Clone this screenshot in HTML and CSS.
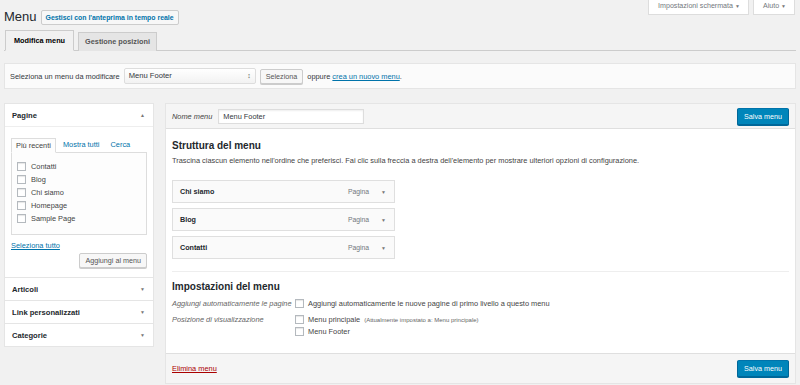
FILE: index.html
```html
<!DOCTYPE html>
<html lang="it">
<head>
  <meta charset="UTF-8" />
  <title>Menu</title>
  <link rel="stylesheet" href="styles.css">
</head>
<body>
  <div class="wrap">

    <div class="page-head">
      <div class="title-group">
        <h1>Menu</h1>
        <a class="title-action">Gestisci con l'anteprima in tempo reale</a>
      </div>
      <div class="screen-meta">
        <span class="meta-btn">Impostazioni schermata <i class="arr">&#9660;</i></span>
        <span class="meta-btn">Aiuto <i class="arr">&#9660;</i></span>
      </div>
    </div>

    <div class="nav-tabs">
      <span class="nav-tab active">Modifica menu</span>
      <span class="nav-tab">Gestione posizioni</span>
    </div>

    <div class="manage-menus">
      <span>Seleziona un menu da modificare</span>
      <span class="select">Menu Footer <i class="updown">&#8597;</i></span>
      <span class="btn">Seleziona</span>
      <span>oppure <a class="link">crea un nuovo menu</a>.</span>
    </div>

    <div class="columns">

      <div class="side">
        <div class="acc open">
          <div class="acc-head">Pagine <i class="arr up">&#9650;</i></div>
          <div class="acc-body">
            <div class="inner-tabs">
              <span class="inner-tab active">Più recenti</span>
              <span class="inner-tab">Mostra tutti</span>
              <span class="inner-tab">Cerca</span>
            </div>
            <div class="checklist">
              <label class="check-row"><span class="cb"></span>Contatti</label>
              <label class="check-row"><span class="cb"></span>Blog</label>
              <label class="check-row"><span class="cb"></span>Chi siamo</label>
              <label class="check-row"><span class="cb"></span>Homepage</label>
              <label class="check-row"><span class="cb"></span>Sample Page</label>
            </div>
            <a class="link select-all">Seleziona tutto</a>
            <div class="add-row"><span class="btn">Aggiungi al menu</span></div>
          </div>
        </div>
        <div class="acc"><div class="acc-head">Articoli <i class="arr">&#9660;</i></div></div>
        <div class="acc"><div class="acc-head">Link personalizzati <i class="arr">&#9660;</i></div></div>
        <div class="acc"><div class="acc-head">Categorie <i class="arr">&#9660;</i></div></div>
      </div>

      <div class="main">
        <div class="main-head">
          <label class="name-label">Nome menu</label>
          <span class="input">Menu Footer</span>
          <span class="btn primary push">Salva menu</span>
        </div>

        <div class="main-body">
          <h3>Struttura del menu</h3>
          <p class="desc">Trascina ciascun elemento nell'ordine che preferisci. Fai clic sulla freccia a destra dell'elemento per mostrare ulteriori opzioni di configurazione.</p>

          <ul class="menu-items">
            <li class="menu-item"><b>Chi siamo</b><span class="type">Pagina</span><i class="arr">&#9660;</i></li>
            <li class="menu-item"><b>Blog</b><span class="type">Pagina</span><i class="arr">&#9660;</i></li>
            <li class="menu-item"><b>Contatti</b><span class="type">Pagina</span><i class="arr">&#9660;</i></li>
          </ul>

          <div class="settings">
            <h3>Impostazioni del menu</h3>
            <div class="set-row">
              <span class="set-label">Aggiungi automaticamente le pagine</span>
              <div class="set-field">
                <label class="check-row"><span class="cb"></span>Aggiungi automaticamente le nuove pagine di primo livello a questo menu</label>
              </div>
            </div>
            <div class="set-row">
              <span class="set-label">Posizione di visualizzazione</span>
              <div class="set-field">
                <label class="check-row"><span class="cb"></span>Menu principale <small>(Attualmente impostato a: Menu principale)</small></label>
                <label class="check-row"><span class="cb"></span>Menu Footer</label>
              </div>
            </div>
          </div>
        </div>

        <div class="main-foot">
          <a class="delete">Elimina menu</a>
          <span class="btn primary push">Salva menu</span>
        </div>
      </div>

    </div>
  </div>
</body>
</html>
```

FILE: styles.css
```css
body {
  margin: 0;
  background: #f1f1f1;
  color: #444;
  font-family: "Liberation Sans", Arial, sans-serif;
  font-size: 7.4px;
}

.wrap {
  padding: 0 4px;
}

i {
  font-style: normal;
}

.arr {
  font-size: 5px;
  color: #777;
}

.link {
  color: #0073aa;
  text-decoration: underline;
}

/* header */
.page-head {
  display: flex;
  justify-content: space-between;
  align-items: flex-start;
  height: 25px;
}

.title-group {
  display: flex;
  align-items: center;
  gap: 4px;
  padding-top: 9px;
}

h1 {
  margin: 0;
  font-size: 13px;
  font-weight: normal;
  color: #23282d;
  line-height: 16px;
}

.title-action {
  font-size: 6.9px;
  font-weight: bold;
  color: #0073aa;
  background: #f7f7f7;
  border: 1px solid #ccc;
  border-radius: 2px;
  padding: 0 4px;
  height: 13px;
  line-height: 13px;
}

.screen-meta {
  display: flex;
  gap: 4px;
  margin-right: 1px;
}

.meta-btn {
  background: #fff;
  border: 1px solid #ddd;
  border-top: 0;
  height: 14px;
  line-height: 13px;
  padding: 0 8px 0 9px;
  font-size: 7.1px;
  color: #72777c;
}

/* tabs */
.nav-tabs {
  display: flex;
  gap: 4px;
  margin-top: 6px;
  padding-left: 1px;
  border-bottom: 1px solid #ccc;
  height: 19px;
  align-items: flex-end;
}

.nav-tab {
  border: 1px solid #ccc;
  border-bottom: 0;
  background: #e5e5e5;
  height: 18px;
  line-height: 18px;
  padding: 0 6px;
  font-size: 7.3px;
  font-weight: bold;
  color: #555;
  margin-bottom: -1px;
}

.nav-tab.active {
  background: #f1f1f1;
  color: #000;
  height: 19px;
  line-height: 20px;
  border-bottom: 1px solid #f1f1f1;
  padding: 0 8px;
}

/* select bar */
.manage-menus {
  margin-top: 12px;
  height: 24px;
  background: #fbfbfb;
  border: 1px solid #e5e5e5;
  display: flex;
  align-items: center;
  gap: 4px;
  padding: 0 5px;
  color: #32373c;
}

.select {
  width: 122px;
  height: 14px;
  line-height: 14px;
  border: 1px solid #ddd;
  background: linear-gradient(#fff, #f2f2f2);
  border-radius: 2px;
  padding: 0 4px;
  display: flex;
  justify-content: space-between;
  font-size: 7.6px;
  color: #32373c;
}

.updown {
  font-size: 7px;
  color: #555;
  font-weight: bold;
}

.btn {
  display: inline-block;
  background: #f7f7f7;
  border: 1px solid #ccc;
  border-radius: 2px;
  box-shadow: 0 1px 0 #ccc;
  height: 13px;
  line-height: 13px;
  padding: 0 5px;
  color: #555;
  font-size: 7.2px;
}

.btn.primary {
  background: #0085ba;
  border-color: #0073aa #006799 #006799;
  box-shadow: 0 1px 0 #006799;
  color: #fff;
  height: 15px;
  line-height: 15px;
  padding: 0 6px;
  font-size: 7.2px;
}

/* columns */
.columns {
  display: flex;
  gap: 11px;
  margin-top: 14px;
  align-items: flex-start;
}

.side {
  width: 148px;
  border: 1px solid #e5e5e5;
  background: #fff;
}

.acc + .acc {
  border-top: 1px solid #e5e5e5;
}

.acc-head {
  height: 22px;
  padding: 0 8px 0 7px;
  display: flex;
  justify-content: space-between;
  align-items: center;
  font-size: 7.6px;
  font-weight: bold;
  color: #23282d;
}

.acc.open .acc-head {
  border-bottom: 1px solid #eee;
}

.acc-body {
  padding: 11px 6px 9px 6px;
}

.inner-tabs {
  display: flex;
  align-items: flex-end;
  gap: 3px;
  height: 14px;
}

.inner-tab {
  padding: 0 4px;
  line-height: 14px;
  color: #0073aa;
}

.inner-tab.active {
  color: #444;
  border: 1px solid #ddd;
  border-bottom: 1px solid #fdfdfd;
  background: #fdfdfd;
  margin-bottom: -1px;
  line-height: 13px;
}

.checklist {
  border: 1px solid #ddd;
  background: #fdfdfd;
  height: 72px;
  padding: 9px 5px 0 5px;
  display: flex;
  flex-direction: column;
  gap: 4px;
}

.check-row {
  display: flex;
  align-items: center;
  gap: 5px;
  height: 9px;
  color: #444;
}

.cb {
  width: 7px;
  height: 7px;
  border: 1px solid #b4b9be;
  background: #fff;
  box-shadow: inset 0 1px 1px rgba(0, 0, 0, 0.1);
}

.select-all {
  display: block;
  margin-top: 6px;
}

.add-row {
  display: flex;
  justify-content: flex-end;
  margin-top: 3px;
}

/* main */
.main {
  flex: 1;
  border: 1px solid #e5e5e5;
  background: #fff;
}

.main-head {
  height: 24px;
  background: #f5f5f5;
  border-bottom: 1px solid #dfdfdf;
  display: flex;
  align-items: center;
  gap: 6px;
  padding: 0 6px;
}

.name-label {
  font-style: italic;
  color: #444;
}

.input {
  width: 136px;
  height: 13px;
  line-height: 13px;
  border: 1px solid #ddd;
  background: #fff;
  padding: 0 4px;
  color: #32373c;
  font-size: 7.4px;
  box-shadow: inset 0 1px 2px rgba(0, 0, 0, 0.07);
}

.push {
  margin-left: auto;
}

.main-body {
  padding: 10px 6px 0 6px;
}

h3 {
  margin: 0;
  font-size: 10px;
  font-weight: bold;
  color: #23282d;
  line-height: 13px;
}

.desc {
  margin: 4px 0 0 0;
  line-height: 10px;
}

.menu-items {
  list-style: none;
  margin: 14px 0 0 0;
  padding: 0;
  display: flex;
  flex-direction: column;
  gap: 5px;
}

.menu-item {
  width: 206px;
  height: 21px;
  border: 1px solid #dfdfdf;
  background: #fafafa;
  display: flex;
  align-items: center;
  padding: 0 8px 0 7px;
  gap: 12px;
}

.menu-item b {
  flex: 1;
  color: #23282d;
  font-size: 7.2px;
}

.menu-item .type {
  color: #72777c;
  font-size: 6.8px;
}

.settings {
  margin-top: 12px;
  border-top: 1px solid #eee;
  padding-top: 8px;
  padding-bottom: 17px;
}

.set-row {
  display: flex;
  margin-top: 6px;
}

.set-row + .set-row {
  margin-top: 7px;
}

.set-label {
  width: 123px;
  font-style: italic;
  color: #666;
  line-height: 9px;
}

.set-field {
  display: flex;
  flex-direction: column;
  gap: 3px;
}

.set-field .check-row {
  gap: 4px;
}

small {
  font-size: 6px;
  color: #666;
}

.main-foot {
  height: 29px;
  background: #f5f5f5;
  border-top: 1px solid #dfdfdf;
  display: flex;
  align-items: center;
  padding: 0 6px;
}

.delete {
  color: #a00;
  text-decoration: underline;
}
```
